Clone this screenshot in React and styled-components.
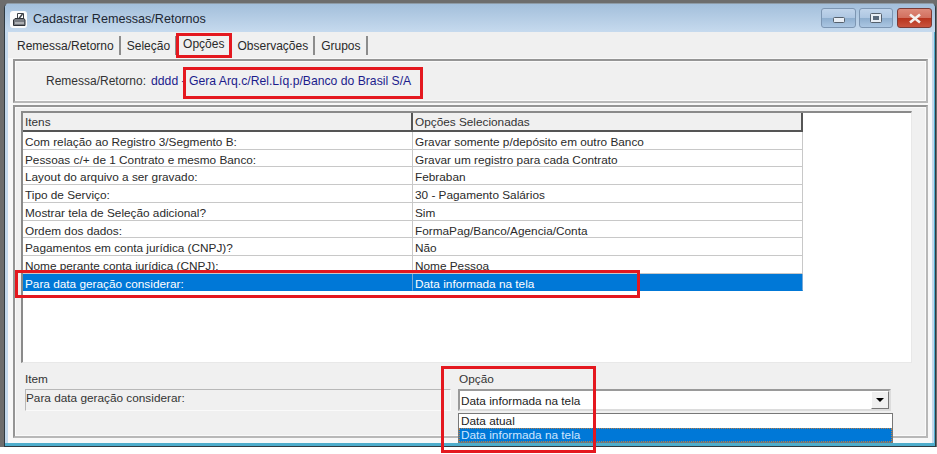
import React from "react";
import styled, { createGlobalStyle } from "styled-components";

const ROWS = [
  ["Com relação ao Registro 3/Segmento B:", "Gravar somente p/depósito em outro Banco"],
  ["Pessoas c/+ de 1 Contrato e mesmo Banco:", "Gravar um registro para cada Contrato"],
  ["Layout do arquivo a ser gravado:", "Febraban"],
  ["Tipo de Serviço:", "30 - Pagamento Salários"],
  ["Mostrar tela de Seleção adicional?", "Sim"],
  ["Ordem dos dados:", "FormaPag/Banco/Agencia/Conta"],
  ["Pagamentos em conta jurídica (CNPJ)?", "Não"],
  ["Nome perante conta jurídica (CNPJ):", "Nome Pessoa"],
  ["Para data geração considerar:", "Data informada na tela", true],
];

const TABS = [
  { name: "Remessa/Retorno", left: 4 },
  { name: "Seleção", left: 6 },
  { name: "Opções", left: 6, active: true },
  { name: "Observações", left: 6 },
  { name: "Grupos", left: 6 },
];

const GlobalStyle = createGlobalStyle`
  html, body {
    margin: 0;
    padding: 0;
    background: #fff;
  }
  body {
    font-family: "Liberation Sans", Arial, sans-serif;
    font-size: 12px;
    color: #222;
  }
`;

const Page = styled.div`
  position: relative;
  width: 937px;
  height: 454px;
  overflow: hidden;
  background: linear-gradient(#6d6d6d 0, #6d6d6d 447px, #fff 447px);
  padding: 3px 1px 7px 4px;
  box-sizing: border-box;
`;

const Window = styled.div`
  display: flex;
  flex-direction: column;
  height: 100%;
  box-sizing: border-box;
  border: 1px solid #2f3a42;
  border-top-color: #8e9ba6;
  border-radius: 5px 5px 0 0;
  background: #c4d8ec;
  box-shadow: inset -1px -3px 0 #4fadcc;
  padding: 0 3px 3px;
`;

const TitleBar = styled.div`
  display: flex;
  align-items: flex-start;
  justify-content: space-between;
  height: 28px;
  flex: none;
  box-sizing: border-box;
  margin: 0 -3px;
  padding: 4px 3px 0 5px;
  border-radius: 4px 4px 0 0;
  background: linear-gradient(#a3bfdb, #c6daee);
`;

const TitleGroup = styled.div`
  display: flex;
  align-items: center;
  gap: 6px;
  height: 22px;
`;

const TitleText = styled.span`
  font-size: 12.6px;
  color: #1d2733;
`;

const WindowButtons = styled.div`
  display: flex;
  gap: 3px;
`;

const WindowButton = styled.div`
  display: flex;
  align-items: center;
  justify-content: center;
  width: ${(p) => p.$w}px;
  height: 20px;
  box-sizing: border-box;
  margin-left: ${(p) => (p.$danger ? 1 : 0)}px;
  border: 1px solid ${(p) => (p.$danger ? "#7c3b36" : "#7d96b2")};
  border-radius: 3px;
  background: ${(p) =>
    p.$danger
      ? "linear-gradient(#dd8a7a 0, #d2705f 48%, #b8351f 52%, #c9533e 100%)"
      : "linear-gradient(#c0d4ea 0, #aec7e2 48%, #8fafcf 52%, #abc6e2 100%)"};
`;

const MinimizeGlyph = styled.svg`
  margin-top: 4px;
`;

const Client = styled.div`
  flex: 1;
  display: flex;
  flex-direction: column;
  min-height: 0;
  background: #f8f8f8;
  border-left: 5px solid #f8f8f8;
  padding-right: 2px;
`;

const TabStrip = styled.div`
  display: flex;
  height: 26px;
  flex: none;
  margin: 0 -2px 1px -5px;
  padding: 4px 0 0 5px;
  box-sizing: border-box;
  background: #f0f0f0;
`;

const Tab = styled.div`
  display: flex;
  align-items: center;
  height: 19px;
  padding: 0 5px 0 ${(p) => p.$left}px;
  border-right: 2px solid #8c8c8c;
  color: #2a2a2a;
  white-space: nowrap;
`;

const TabLabel = styled.span`
  position: relative;
  top: ${(p) => (p.$active ? "-2px" : "0")};
`;

const HeaderPanel = styled.div`
  display: flex;
  align-items: center;
  height: 44px;
  flex: none;
  box-sizing: border-box;
  margin: 0 2px 2px 0;
  padding-left: 31px;
  background: #f0f0f0;
  border: 2px solid;
  border-color: #959595 #b8b8b8 #b8b8b8 #959595;
  box-shadow: inset 0 0 0 1px #fafafa;
`;

const HeaderLabel = styled.span`
  margin-right: 5px;
  color: #333;
`;

const HeaderValue = styled.span`
  font-size: 12.2px;
  color: #1c1c8c;
  white-space: nowrap;
`;

const BodyPanel = styled.div`
  flex: 1;
  display: flex;
  flex-direction: column;
  min-height: 0;
  font-size: 11.8px;
  margin: 0 2px 5px 0;
  padding: 4px 6px 0 6px;
  background: #f0f0f0;
  border: 2px solid;
  border-color: #959595 #b8b8b8 #b8b8b8 #959595;
  box-shadow: inset 0 0 0 1px #fafafa;
`;

const GridArea = styled.div`
  height: 252px;
  flex: none;
  background: #fff;
  border-left: 2px solid #8a8a8a;
  border-top: 2px solid #8a8a8a;
  border-right: 1px solid #e8e8e8;
  border-bottom: 1px solid #e8e8e8;
  margin-right: 8px;
  box-sizing: border-box;
`;

const GridTable = styled.div`
  display: grid;
  grid-template-columns: 390px 390px;
  grid-template-rows: 19px;
  grid-auto-rows: 17.72px;
  width: 780px;
`;

const HeadCell = styled.div`
  padding-left: 2px;
  box-sizing: border-box;
  background: #f0f0f0;
  border-right: 2px solid #555;
  border-bottom: 2px solid #555;
  line-height: 19px;
  color: #333;
`;

const Cell = styled.div`
  padding-left: 2px;
  box-sizing: border-box;
  line-height: 20px;
  white-space: nowrap;
  overflow: hidden;
  background: ${(p) => (p.$selected ? "#0078d7" : "#fff")};
  color: ${(p) => (p.$selected ? "#fff" : "#2a2a2a")};
  border-right: 1px solid ${(p) => (p.$selected ? "#7aa9d6" : "#c8c8c8")};
  border-bottom: 1px solid ${(p) => (p.$selected ? "#0078d7" : "#c8c8c8")};
`;

const EditorRow = styled.div`
  display: grid;
  grid-template-columns: 426px 433px;
  column-gap: 7px;
  padding: 8px 0 0 4px;
`;

const EditorColumn = styled.div`
  position: relative;
  display: flex;
  flex-direction: column;
  gap: 2px;
`;

const EditorLabel = styled.div`
  height: 16px;
  line-height: 16px;
  padding-left: ${(p) => p.$indent || 0}px;
  color: #333;
`;

const ReadonlyField = styled.div`
  height: 22px;
  box-sizing: border-box;
  line-height: 17px;
  color: #333;
  border: 1px solid;
  border-color: #b8b8b8 #fafafa #fafafa #b8b8b8;
`;

const Combo = styled.div`
  display: flex;
  align-items: center;
  justify-content: space-between;
  height: 22px;
  box-sizing: border-box;
  padding-left: 1px;
  background: #fff;
  border: 2px solid;
  border-color: #9a9a9a #dcdcdc #dcdcdc #9a9a9a;
  color: #222;
`;

const ComboValue = styled.span`
  margin-top: 2px;
`;

const ComboButton = styled.div`
  display: flex;
  align-items: center;
  justify-content: center;
  width: 18px;
  height: 18px;
  background: #f0f0f0;
  border: 1px solid;
  border-color: #fff #777 #777 #fff;
  box-sizing: border-box;
`;

const Arrow = styled.span`
  width: 0;
  height: 0;
  border-left: 4px solid transparent;
  border-right: 4px solid transparent;
  border-top: 4px solid #000;
`;

const DropList = styled.div`
  position: absolute;
  top: 42px;
  left: 0;
  width: 435px;
  box-sizing: border-box;
  background: #fff;
  border: 1px solid #777;
  z-index: 2;
`;

const DropItem = styled.div`
  height: 14px;
  line-height: 15px;
  padding-left: 2px;
  background: ${(p) => (p.$selected ? "#0078d7" : "#fff")};
  color: ${(p) => (p.$selected ? "#cfe6ff" : "#222")};
  outline: ${(p) => (p.$selected ? "1px dotted #b8804a" : "none")};
  outline-offset: -1px;
`;

const Highlight = styled.div`
  position: absolute;
  left: ${(p) => p.$x}px;
  top: ${(p) => p.$y}px;
  width: ${(p) => p.$w}px;
  height: ${(p) => p.$h}px;
  box-sizing: border-box;
  border: 3px solid #e4181f;
  z-index: 3;
  pointer-events: none;
`;

const AppIcon = () => (
  <svg width="17" height="17" viewBox="0 0 17 17">
    <rect x="0" y="0" width="17" height="17" rx="3" fill="#fbfbfb" />
    <path d="M7.5 2.5h6v6.500h-6z" fill="#fff" stroke="#3c4046" />
    <path d="M12.5 3L9 7.500" stroke="#3c4046" strokeWidth="1.4" />
    <path d="M3.500 9l1.500-1.500h9l1 1.500v5.500h-11.500z" fill="#777b81" stroke="#2f3237" />
    <path d="M5 12h9" stroke="#e6e6e6" />
  </svg>
);

const App = () => (
  <Page>
    <GlobalStyle />
    <Window>
      <TitleBar>
        <TitleGroup>
          <AppIcon />
          <TitleText>Cadastrar Remessas/Retornos</TitleText>
        </TitleGroup>
        <WindowButtons>
          <WindowButton $w={35}>
            <MinimizeGlyph width="12" height="6" viewBox="0 0 12 6">
              <rect x="0.5" y="0.5" width="11" height="5" rx="1" fill="#e8eef5" stroke="#55606c" />
            </MinimizeGlyph>
          </WindowButton>
          <WindowButton $w={34}>
            <svg width="12" height="10" viewBox="0 0 12 10">
              <rect x="0.5" y="0.5" width="11" height="9" rx="1" fill="#e8eef5" stroke="#55606c" />
              <rect x="3" y="3" width="6" height="4" fill="#5a6a7c" />
            </svg>
          </WindowButton>
          <WindowButton $w={35} $danger>
            <svg width="14" height="11" viewBox="0 0 14 11">
              <path d="M2 1.500l10 8M12 1.500l-10 8" stroke="#f4f0ee" strokeWidth="2.6" />
            </svg>
          </WindowButton>
        </WindowButtons>
      </TitleBar>
      <Client>
        <TabStrip>
          {TABS.map((tab) => (
            <Tab key={tab.name} $left={tab.left}>
              <TabLabel $active={tab.active}>{tab.name}</TabLabel>
            </Tab>
          ))}
        </TabStrip>
        <HeaderPanel>
          <HeaderLabel>Remessa/Retorno:</HeaderLabel>
          <HeaderValue>dddd - Gera Arq.c/Rel.Líq.p/Banco do Brasil S/A</HeaderValue>
        </HeaderPanel>
        <BodyPanel>
          <GridArea>
            <GridTable>
              <HeadCell>Itens</HeadCell>
              <HeadCell>Opções Selecionadas</HeadCell>
              {ROWS.map(([item, option, selected]) => (
                <React.Fragment key={item}>
                  <Cell $selected={selected}>{item}</Cell>
                  <Cell $selected={selected}>{option}</Cell>
                </React.Fragment>
              ))}
            </GridTable>
          </GridArea>
          <EditorRow>
            <EditorColumn>
              <EditorLabel>Item</EditorLabel>
              <ReadonlyField>Para data geração considerar:</ReadonlyField>
            </EditorColumn>
            <EditorColumn>
              <EditorLabel $indent={1}>Opção</EditorLabel>
              <Combo>
                <ComboValue>Data informada na tela</ComboValue>
                <ComboButton>
                  <Arrow />
                </ComboButton>
              </Combo>
              <DropList>
                <DropItem>Data atual</DropItem>
                <DropItem $selected>Data informada na tela</DropItem>
              </DropList>
            </EditorColumn>
          </EditorRow>
        </BodyPanel>
      </Client>
    </Window>
    <Highlight $x={176} $y={33} $w={56} $h={25} />
    <Highlight $x={183} $y={67} $w={240} $h={32} />
    <Highlight $x={15} $y={270} $w={625} $h={28} />
    <Highlight $x={441} $y={366} $w={155} $h={87} />
  </Page>
);

export default App;
